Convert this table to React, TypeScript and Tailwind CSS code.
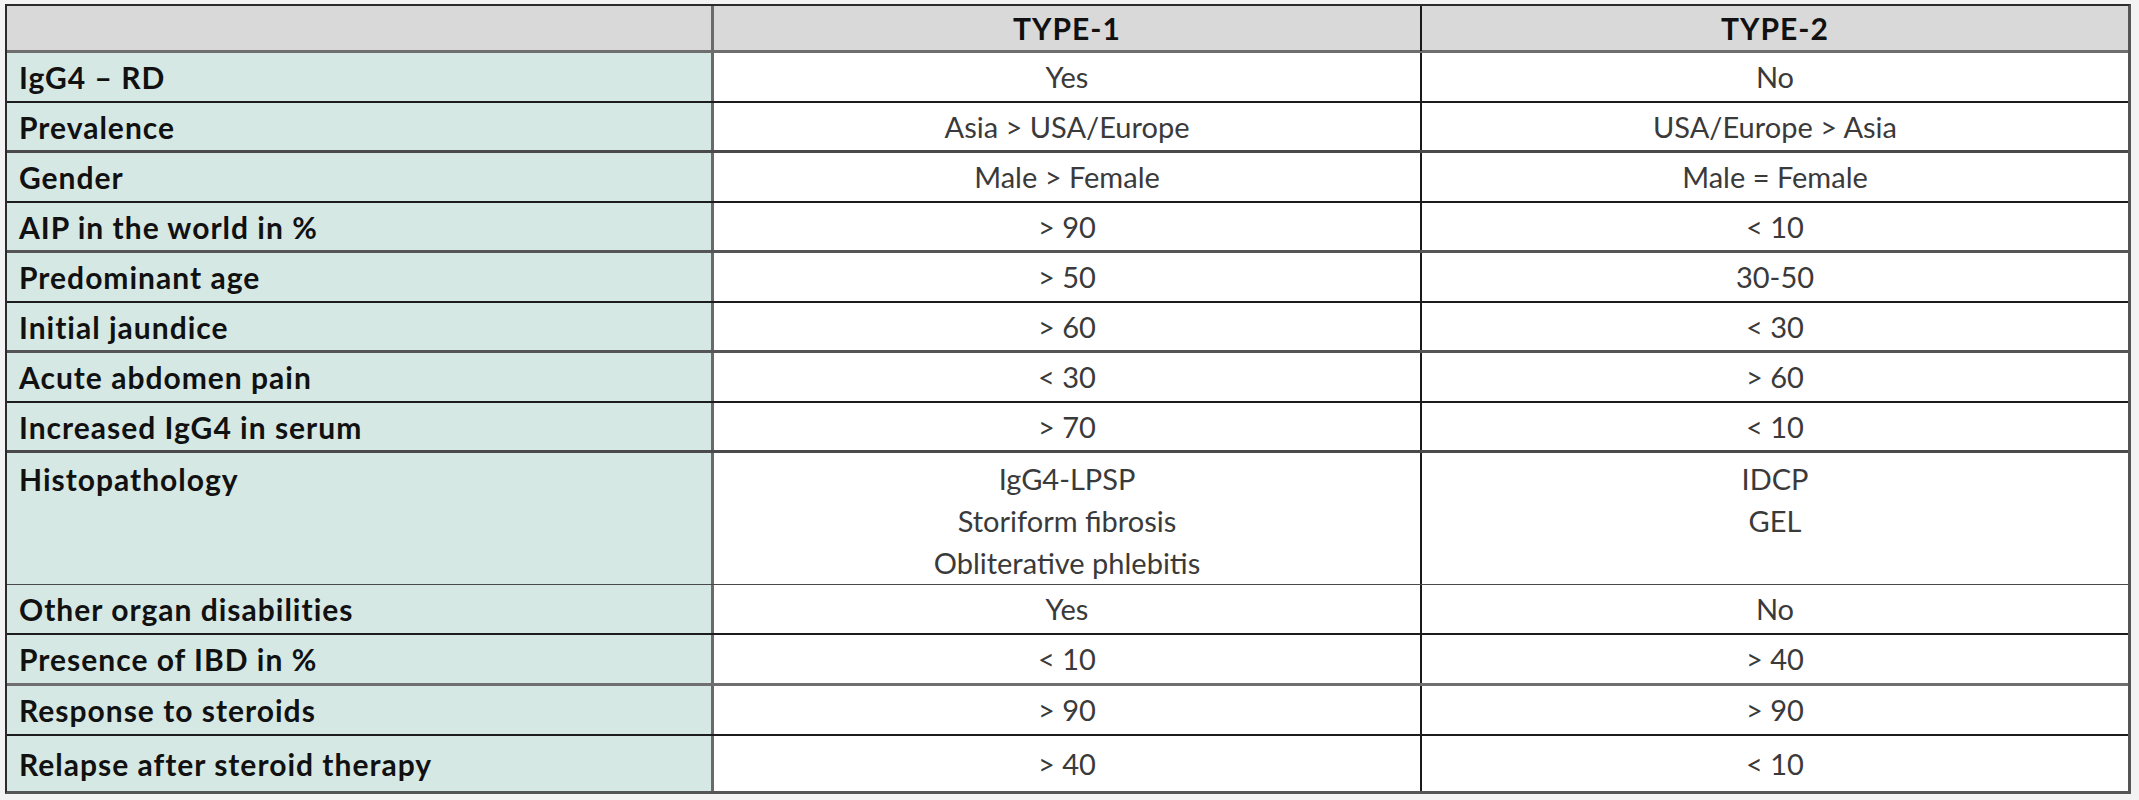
const font = { fontFamily: 'Lato, "Open Sans", sans-serif' };

interface Row {
  readonly label: string;
  readonly type1: string[];
  readonly type2: string[];
  readonly h: string;
  readonly line: string;
  readonly tall?: boolean;
}

const rows: Row[] = [
  { label: 'IgG4 – RD', type1: ['Yes'], type2: ['No'], h: 'h-[50px]', line: 'border-b-2 border-[#1c1c1c]' },
  { label: 'Prevalence', type1: ['Asia > USA/Europe'], type2: ['USA/Europe > Asia'], h: 'h-[50px]', line: 'border-b-[3px] border-[#4a4a4a]' },
  { label: 'Gender', type1: ['Male > Female'], type2: ['Male = Female'], h: 'h-[50px]', line: 'border-b-2 border-[#1c1c1c]' },
  { label: 'AIP in the world in %', type1: ['> 90'], type2: ['< 10'], h: 'h-[50px]', line: 'border-b-[3px] border-[#555]' },
  { label: 'Predominant age', type1: ['> 50'], type2: ['30-50'], h: 'h-[50px]', line: 'border-b-2 border-[#1c1c1c]' },
  { label: 'Initial jaundice', type1: ['> 60'], type2: ['< 30'], h: 'h-[50px]', line: 'border-b-[3px] border-[#555]' },
  { label: 'Acute abdomen pain', type1: ['< 30'], type2: ['> 60'], h: 'h-[50px]', line: 'border-b-2 border-[#1c1c1c]' },
  { label: 'Increased IgG4 in serum', type1: ['> 70'], type2: ['< 10'], h: 'h-[50px]', line: 'border-b-[3px] border-[#4a4a4a]' },
  {
    label: 'Histopathology',
    type1: ['IgG4-LPSP', 'Storiform fibrosis', 'Obliterative phlebitis'],
    type2: ['IDCP', 'GEL'],
    h: 'h-[132px]',
    line: 'border-b-[3px] border-[#4a4a4a]',
    tall: true,
  },
  { label: 'Other organ disabilities', type1: ['Yes'], type2: ['No'], h: 'h-[50px]', line: 'border-b-2 border-[#1c1c1c]' },
  { label: 'Presence of IBD in %', type1: ['< 10'], type2: ['> 40'], h: 'h-[51px]', line: 'border-b-[3px] border-[#6f6f6f]' },
  { label: 'Response to steroids', type1: ['> 90'], type2: ['> 90'], h: 'h-[50px]', line: 'border-b-2 border-[#1c1c1c]' },
  { label: 'Relapse after steroid therapy', type1: ['> 40'], type2: ['< 10'], h: 'h-[55px]', line: '' },
];

function ValueCell({ lines, tall, last }: { lines: string[]; tall?: boolean; last?: boolean }) {
  return (
    <div
      className={`flex flex-col items-center bg-white text-[29px] leading-[42px] text-[#3a3a3a] ${
        tall ? 'justify-start pt-[5px]' : 'justify-center'
      } ${last ? '' : 'border-r-2 border-[#1a1a1a]'}`}
    >
      {lines.map((l) => (
        <span key={l}>{l}</span>
      ))}
    </div>
  );
}

export default function App() {
  return (
    <div className="min-h-[800px] w-[2139px] bg-[#f3f3f3] pl-[5px] pt-[4px]" style={font}>
      <div className="w-[2126px] border-2 border-[#2b2b2b] border-r-[3px] border-r-[#555] border-b-[3px] border-b-[#555]">
        <div className="grid h-[47px] grid-cols-[707px_708px_1fr] border-b-[3px] border-[#6e6e6e] bg-[#d9d9d9] text-[30px] font-bold tracking-[1px] text-[#111]">
          <div className="border-r-[3px] border-[#6a6a6a]" />
          <div className="flex items-center justify-center border-r-2 border-[#1a1a1a]">TYPE-1</div>
          <div className="flex items-center justify-center">TYPE-2</div>
        </div>
        {rows.map((r) => (
          <div key={r.label} className={`grid grid-cols-[707px_708px_1fr] ${r.h} ${r.line}`}>
            <div
              className={`flex border-r-[3px] border-[#6a6a6a] bg-[#d6e8e3] pl-[12px] text-[30px] font-bold leading-[42px] tracking-[1px] text-[#111] ${
                r.tall ? 'items-start pt-[5px]' : 'items-center'
              }`}
            >
              {r.label}
            </div>
            <ValueCell lines={r.type1} tall={r.tall} />
            <ValueCell lines={r.type2} tall={r.tall} last />
          </div>
        ))}
      </div>
    </div>
  );
}
